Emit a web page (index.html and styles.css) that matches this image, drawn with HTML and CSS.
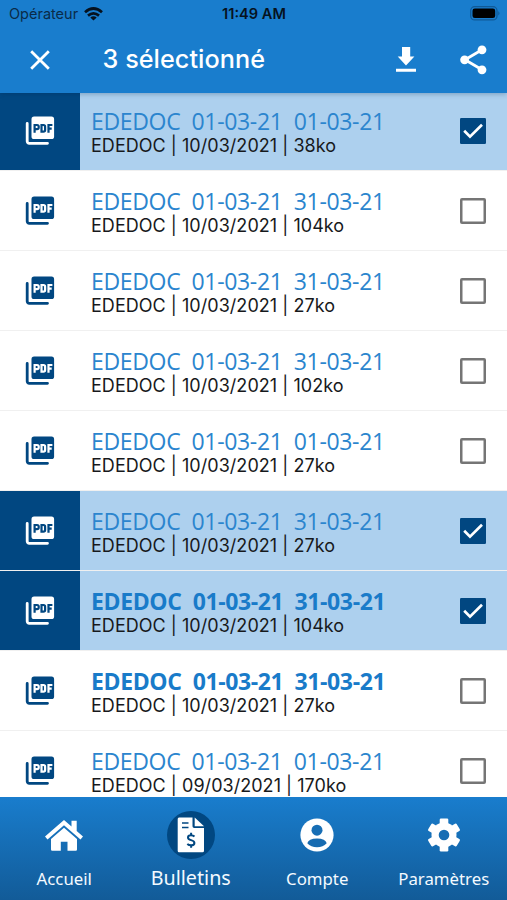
FILE: index.html
```html
<!DOCTYPE html>
<html lang="fr">
<head>
<meta charset="utf-8">
<title>Bulletins</title>
<link rel="stylesheet" href="styles.css">
</head>
<body>
<svg class="defs" aria-hidden="true">
  <symbol id="pdf" viewBox="0 0 30 30">
    <path d="M2.200 7.500v17.800a2 2 0 0 0 2 2H22.500" fill="none" stroke="currentColor" stroke-width="2.800" stroke-linecap="round"/>
    <rect x="6.500" y="0.500" width="22.600" height="22.600" rx="2.600" fill="currentColor"/>
    <g class="pdf-mark" fill="none" stroke-width="2.200">
      <path d="M9.600 16.800V9h2.400q1.700 0 1.700 1.600v1q0 1.600-1.700 1.600H9.600"/>
      <path d="M16.500 9h1.900q1.700 0 1.700 1.700v3.300q0 1.700-1.700 1.700h-1.900z"/>
      <path d="M23.500 16.800V9h3.900M23.500 12.700h3.200"/>
    </g>
  </symbol>
  <symbol id="check" viewBox="0 0 26 26">
    <rect width="26" height="26" rx="1.200" fill="#014781"/>
    <path d="M4.200 12.800l5.800 5.900L22 6.800" fill="none" stroke="#fff" stroke-width="2.700"/>
  </symbol>
</svg>
<div class="app">
  <header>
    <div class="status">
      <div class="carrier"><span>Opérateur</span>
        <svg width="19" height="14" viewBox="0 0 19 14" fill="none" stroke="#06121f" stroke-width="2.700"><path d="M1 5.200Q9.500-2.200 18 5.200M4 8.600q5.500-4.600 11 0"/><path d="M9.500 13.600L6.300 10.500q3.200-2.500 6.400 0z" fill="#06121f" stroke="none"/></svg>
      </div>
      <time>11:49 AM</time>
      <svg class="battery" width="31" height="15" viewBox="0 0 31 15"><rect x=".7" y=".7" width="26.300" height="13.200" rx="4" fill="none" stroke="#105a97" stroke-width="1.300"/><rect x="2.500" y="2.500" width="22.700" height="9.600" rx="2.300"/><path d="M28.300 5q2.400 2.300 0 4.600z" fill="#105a97"/></svg>
    </div>
    <div class="toolbar">
      <svg class="close" width="20" height="20" viewBox="0 0 20 20"><path d="M1.200 1.200l17.600 17.600M18.800 1.200L1.200 18.800" stroke="#fff" stroke-width="2.800"/></svg>
      <h1>3 sélectionné</h1>
      <svg class="download" width="20" height="26" viewBox="0 0 20 26" fill="#fff"><path d="M6 0h8.200v9.500h4.200L10 18.500 1.700 9.500H6zM0 21.700h20v3H0z"/></svg>
      <svg class="share" width="27" height="30" viewBox="0 0 27 30"><path d="M22 4.800L5 14.800l17 10" fill="none" stroke="#fff" stroke-width="2.800"/><g fill="#fff"><circle cx="22" cy="4.800" r="4.400"/><circle cx="4.600" cy="14.800" r="4.400"/><circle cx="22" cy="24.800" r="4.400"/></g></svg>
    </div>
  </header>
  <main>
    <div class="row selected"><div class="file"><svg><use href="#pdf"/></svg></div><div class="text"><h2>EDEDOC  01-03-21  01-03-21</h2><p>EDEDOC | 10/03/2021 | 38ko</p></div><div class="box"><svg><use href="#check"/></svg></div></div>
    <div class="row"><div class="file"><svg><use href="#pdf"/></svg></div><div class="text"><h2>EDEDOC  01-03-21  31-03-21</h2><p>EDEDOC | 10/03/2021 | 104ko</p></div><div class="box"></div></div>
    <div class="row"><div class="file"><svg><use href="#pdf"/></svg></div><div class="text"><h2>EDEDOC  01-03-21  31-03-21</h2><p>EDEDOC | 10/03/2021 | 27ko</p></div><div class="box"></div></div>
    <div class="row"><div class="file"><svg><use href="#pdf"/></svg></div><div class="text"><h2>EDEDOC  01-03-21  31-03-21</h2><p>EDEDOC | 10/03/2021 | 102ko</p></div><div class="box"></div></div>
    <div class="row"><div class="file"><svg><use href="#pdf"/></svg></div><div class="text"><h2>EDEDOC  01-03-21  01-03-21</h2><p>EDEDOC | 10/03/2021 | 27ko</p></div><div class="box"></div></div>
    <div class="row selected"><div class="file"><svg><use href="#pdf"/></svg></div><div class="text"><h2>EDEDOC  01-03-21  31-03-21</h2><p>EDEDOC | 10/03/2021 | 27ko</p></div><div class="box"><svg><use href="#check"/></svg></div></div>
    <div class="row selected unread"><div class="file"><svg><use href="#pdf"/></svg></div><div class="text"><h2>EDEDOC  01-03-21  31-03-21</h2><p>EDEDOC | 10/03/2021 | 104ko</p></div><div class="box"><svg><use href="#check"/></svg></div></div>
    <div class="row unread"><div class="file"><svg><use href="#pdf"/></svg></div><div class="text"><h2>EDEDOC  01-03-21  31-03-21</h2><p>EDEDOC | 10/03/2021 | 27ko</p></div><div class="box"></div></div>
    <div class="row"><div class="file"><svg><use href="#pdf"/></svg></div><div class="text"><h2>EDEDOC  01-03-21  01-03-21</h2><p>EDEDOC | 09/03/2021 | 170ko</p></div><div class="box"></div></div>
  </main>
  <nav>
    <a class="tab"><span class="icon"><svg width="38" height="31" viewBox="0 0 38 31" fill="#fff"><path d="M19 0l7.500 6.500V.8h5.200v10.300l6.300 5.500-2.500 3L19 5.200 2.500 19.600 0 16.600z"/><path d="M19 7.800l13 11.300v10.400q0 1.200-1.200 1.200H22.500v-9h-6.700v9H7.200Q6 30.700 6 29.500V19.100z"/></svg></span><span class="label">Accueil</span></a>
    <a class="tab active"><span class="icon"><svg width="28" height="36" viewBox="0 0 28 36"><path d="M2 .5h13.500v8.800q0 1.700 1.700 1.700H27v22.800q0 1.500-1.500 1.500H2Q.7 35.300.7 33.800V2Q.7.500 2 .500z" fill="#fff"/><path d="M17.700.500L27 9.200h-9.300z" fill="#fff"/><path d="M5 6h6.500M5 10.500h6.500" stroke="#014781" stroke-width="1.700"/><path d="M17.500 19.500q-1.400-1.300-3.500-1.300-3 0-3 2.300 0 1.800 3.100 2.600 3.300.9 3.300 2.800 0 2.400-3.300 2.400-2.300 0-3.800-1.300M14.100 15.800v2.400M14.100 28.300v2.400" fill="none" stroke="#014781" stroke-width="2"/></svg></span><span class="label">Bulletins</span></a>
    <a class="tab"><span class="icon"><svg width="34" height="34" viewBox="0 0 34 34"><circle cx="17" cy="17" r="16.600" fill="#fff"/><circle cx="17" cy="12.200" r="5.500" fill="#176eb5"/><path d="M7.300 25.200Q8.500 20.400 17 20.400t9.700 4.800Q23 29.300 17 29.300T7.300 25.200z" fill="#176bb0"/></svg></span><span class="label">Compte</span></a>
    <a class="tab"><span class="icon"><svg width="34" height="34" viewBox="0 0 34 34"><g fill="#fff"><circle cx="17" cy="17" r="12.500"/><rect x="12.700" y=".5" width="8.600" height="33" rx="1.300"/><rect x="12.700" y=".5" width="8.600" height="33" rx="1.300" transform="rotate(60 17 17)"/><rect x="12.700" y=".5" width="8.600" height="33" rx="1.300" transform="rotate(120 17 17)"/></g><circle cx="17" cy="17" r="5.300" fill="#176db3"/></svg></span><span class="label">Paramètres</span></a>
  </nav>
</div>
</body>
</html>
```
FILE: styles.css
```css
* { box-sizing: border-box; }
body, h1, h2, p { margin: 0; }
svg { display: block; }
.defs { position: absolute; width: 0; height: 0; }
.app {
  width: 507px;
  height: 900px;
  overflow: hidden;
  display: flex;
  flex-direction: column;
  background: #fff;
  font-family: Inter, "Liberation Sans", sans-serif;
}
header {
  flex: none;
  height: 93px;
  background: #197dcd;
  position: relative;
  z-index: 1;
  box-shadow: 0 1px 5px rgba(0, 40, 80, .3);
}
.status {
  height: 27px;
  display: grid;
  grid-template-columns: 1fr auto 1fr;
  align-items: center;
  padding: 0 6px 0 7px;
  color: #06121f;
  font-size: 14.5px;
}
.carrier { display: flex; align-items: center; gap: 6px; padding-left: 2px; color: #0a2b48; }
.status time { font-weight: 600; font-size: 14.6px; }
.battery { justify-self: end; }
.toolbar { height: 65px; display: flex; align-items: center; padding: 0 20px 0 30px; }
.toolbar h1 {
  flex: 1;
  margin-left: 52.5px;
  font-size: 25.2px;
  line-height: 29px;
  font-weight: 500;
  letter-spacing: .06px;
  color: #fff;
  white-space: nowrap;
}
.download { margin-right: 44px; }
main { flex: 1; min-height: 0; margin-top: -2px; overflow: hidden; }
.row {
  height: 80.06px;
  display: flex;
  align-items: stretch;
  border-bottom: 1px solid #f0f0f0;
}
.row.selected { background: #add0ee; }
.file { --mark: #fff; width: 80px; padding: 24.5px 0 0 25px; color: #014781; }
.file svg { width: 30px; height: 30px; }
.pdf-mark { stroke: var(--mark); }
.selected .file { --mark: #014781; background: #014781; color: #fff; }
.text { flex: 1; padding: 15px 0 0 11px; white-space: pre; }
.text h2 {
  font: 400 23px/30px "Open Sans", sans-serif;
  letter-spacing: -.34px;
  color: #2b85ce;
}
.unread h2 { font-weight: 700; letter-spacing: -.38px; color: #197bc9; }
.text p { font-size: 18px; line-height: 20px; letter-spacing: .04px; color: #17191c; }
.box { flex: none; width: 26px; height: 26px; margin: 27px 21px 0 0; box-shadow: inset 0 0 0 2.5px #757575; border-radius: 2px; }
.selected .box { box-shadow: none; }
.box svg { width: 26px; height: 26px; }
nav {
  flex: none;
  height: 103px;
  padding-left: 1px;
  display: grid;
  grid-template-columns: repeat(4, 1fr);
  background: linear-gradient(#197dcd, #125b98);
}
.tab { display: flex; flex-direction: column; align-items: center; color: #f4faff; }
.icon {
  width: 48px;
  height: 48px;
  margin-top: 14px;
  display: flex;
  align-items: center;
  justify-content: center;
  border-radius: 50%;
}
.label { font: 400 16.8px/24px "Noto Sans", sans-serif; margin-top: 8px; }
.active .icon { background: #014781; }
.active .label { font-size: 19.7px; margin-top: 7px; }
```
